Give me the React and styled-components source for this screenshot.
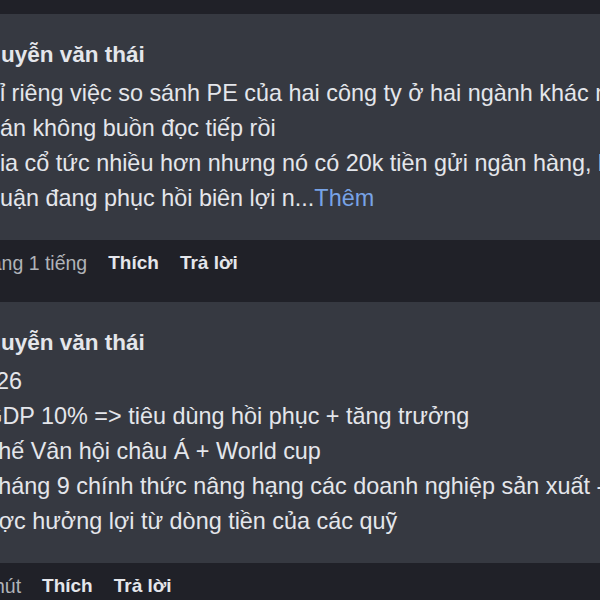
import React from "react"
import styled, { createGlobalStyle } from "styled-components"

const GlobalStyle = createGlobalStyle`
  html, body {
    margin: 0;
    padding: 0;
    background: #202128;
    overflow: hidden;
  }
  body {
    font-family: "Liberation Sans", Arial, sans-serif;
    color: #e4e6eb;
  }
`

const comments = [
  {
    name: "Nguyễn văn thái",
    lines: [
      "Chỉ riêng việc so sánh PE của hai công ty ở hai ngành khác nhau",
      "Chán không buồn đọc tiếp rồi",
      "Chia cổ tức nhiều hơn nhưng nó có 20k tiền gửi ngân hàng, lợi",
      "Nhuận đang phục hồi biên lợi n...",
    ],
    more: true,
    time: "Khoảng 1 tiếng",
  },
  {
    name: "Nguyễn văn thái",
    lines: [
      "2026",
      "- GDP 10% => tiêu dùng hồi phục + tăng trưởng",
      "- Thế Vân hội châu Á + World cup",
      "- Tháng 9 chính thức nâng hạng các doanh nghiệp sản xuất - thép",
      "được hưởng lợi từ dòng tiền của các quỹ",
    ],
    more: false,
    time: "12 phút",
  },
]

export default function App() {
  return (
    <>
      <GlobalStyle />
      <Thread>
        {comments.map((c, i) => (
          <Comment key={i}>
            <Bubble>
              <Name>{c.name}</Name>
              {c.lines.map((l, j) => (
                <Line key={j}>
                  {l}
                  {c.more && j === c.lines.length - 1 && <More>Thêm</More>}
                </Line>
              ))}
            </Bubble>
            <Actions>
              <Time>{c.time}</Time>
              <Action>Thích</Action>
              <Action>Trả lời</Action>
            </Actions>
          </Comment>
        ))}
      </Thread>
    </>
  )
}

const Thread = styled.div`
  padding-top: 14px;
  margin-left: -44px;
`

const Comment = styled.div`
  display: flex;
  flex-direction: column;
`

const Bubble = styled.div`
  background: #363941;
  padding: 23px 0 24px 14px;
  font-size: 23.4px;
  line-height: 35px;
`

const Name = styled.div`
  font-size: 22.5px;
  font-weight: 700;
  margin-left: 1px;
  margin-bottom: 4px;
  white-space: nowrap;
`

const Line = styled.div`
  white-space: nowrap;
`

const More = styled.span`
  color: #78a3e6;
`

const Actions = styled.div`
  display: flex;
  align-items: center;
  gap: 21px;
  height: 24px;
  padding: 11px 0 27px;
  font-size: 19.5px;
  line-height: 24px;
  white-space: nowrap;
`

const Time = styled.span`
  color: #b0b3b8;
`

const Action = styled.span`
  font-size: 19px;
  font-weight: 700;
  color: #e4e6eb;
`
